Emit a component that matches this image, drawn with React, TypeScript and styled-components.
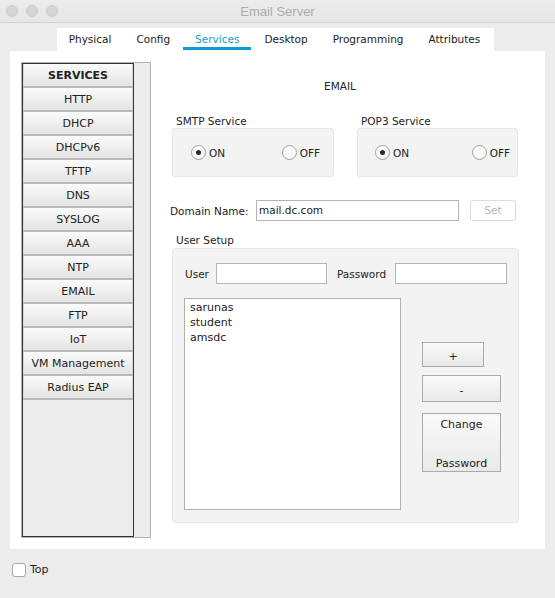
import React from "react";
import styled, { createGlobalStyle } from "styled-components";

const GlobalStyle = createGlobalStyle`
  html, body { margin: 0; padding: 0; background: #ececec; }
  * { box-sizing: border-box; }
`;

const Window = styled.div`
  width: 555px;
  height: 598px;
  background: #ececec;
  display: flex;
  flex-direction: column;
  font-family: "DejaVu Sans", Verdana, sans-serif;
  color: #222;
  overflow: hidden;
`;

const TitleBar = styled.div`
  height: 23px;
  border-bottom: 1px solid #d2d2d2;
  background: linear-gradient(#ececec, #e6e6e6);
  display: flex;
  align-items: center;
  position: relative;
  padding-left: 6px;
  border-radius: 5px 5px 0 0;
`;

const Lights = styled.div`
  display: flex;
  gap: 8px;
`;

const Light = styled.span`
  width: 12px;
  height: 12px;
  border-radius: 50%;
  background: #d5d5d5;
  border: 1px solid #cbcbcb;
`;

const Title = styled.div`
  position: absolute;
  left: 0;
  right: 0;
  text-align: center;
  font-family: "Liberation Sans", Arial, sans-serif;
  font-size: 13px;
  color: #acacac;
  pointer-events: none;
`;

const TabStrip = styled.div`
  align-self: center;
  margin: 5px 4px 0 0;
  display: flex;
  background: #fff;
  height: 23px;
  padding-right: 1px;
`;

const Tab = styled.div<{ $active?: boolean }>`
  position: relative;
  padding: 0 12px;
  margin-right: 1px;
  font-size: 10.5px;
  line-height: 23px;
  color: ${(p) => (p.$active ? "#1a9ad6" : "#222")};
  ${(p) =>
    p.$active &&
    `&::after {
      content: "";
      position: absolute;
      left: 0; right: 0; bottom: 1px;
      height: 3px;
      background: #0a9bd8;
    }`}
`;

const Panel = styled.div`
  margin: 0 10px;
  height: 498px;
  background: #fff;
  display: flex;
  padding: 11px;
`;

const ListFrame = styled.div`
  width: 130px;
  height: 476px;
  border: 1px solid #b2b2b2;
  background: #ececec;
  display: flex;
`;

const ListBox = styled.div`
  width: 112px;
  border: 1px solid #333;
  background: #ececec;
  display: flex;
  flex-direction: column;
`;

const ServiceButton = styled.div<{ $header?: boolean }>`
  height: 24px;
  border-bottom: 2px solid #b8b8b8;
  border-left: 1px solid #dadada;
  border-right: 1px solid #dadada;
  background: linear-gradient(#fbfbfb, #e3e3e3);
  text-align: center;
  font-size: 11px;
  line-height: 24px;
  font-weight: ${(p) => (p.$header ? 700 : 400)};
  color: #222;
  white-space: nowrap;
`;

const ScrollTrack = styled.div`
  flex: 1;
  background: #ececec;
`;

const Pane = styled.div`
  flex: 1;
  display: flex;
  flex-direction: column;
  padding: 0 15px 0 21px;
  font-size: 10.5px;
`;

const PaneTitle = styled.div`
  margin-top: 17px;
  padding-right: 11px;
  text-align: center;
  line-height: 14px;
`;

const ServiceRow = styled.div`
  margin-top: 22px;
  display: grid;
  grid-template-columns: 162px 161px;
  column-gap: 23px;
`;

const Label = styled.div<{ $indent?: number }>`
  line-height: 13px;
  padding-left: ${(p) => p.$indent ?? 4}px;
  white-space: nowrap;
`;

const ServiceBox = styled.div<{ $pl: number; $pr: number }>`
  height: 49px;
  background: #f3f3f3;
  border: 1px solid #e6e6e6;
  border-radius: 3px;
  display: flex;
  align-items: center;
  justify-content: space-between;
  padding: 0 ${(p) => p.$pr}px 0 ${(p) => p.$pl}px;
`;

const RadioOption = styled.div`
  display: flex;
  align-items: center;
  gap: 3px;
`;

const RadioCircle = styled.span<{ $on?: boolean }>`
  width: 15px;
  height: 15px;
  border-radius: 50%;
  border: 1px solid #a0a0a0;
  background: linear-gradient(#ffffff, #f4f4f4);
  display: flex;
  align-items: center;
  justify-content: center;
  &::after {
    content: "";
    width: 5px;
    height: 5px;
    border-radius: 50%;
    background: ${(p) => (p.$on ? "#2b2b2b" : "transparent")};
  }
`;

const DomainRow = styled.div`
  margin-top: 23px;
  margin-left: -2px;
  display: flex;
  align-items: center;
  height: 21px;
`;

const DomainLabel = styled.div`
  width: 86px;
  white-space: nowrap;
`;

const TextInput = styled.div<{ $w: number }>`
  width: ${(p) => p.$w}px;
  height: 21px;
  border: 1px solid #b4b4b4;
  background: #fff;
  padding-left: 2px;
  line-height: 19px;
  white-space: nowrap;
`;

const SetButton = styled.div`
  margin-left: 11px;
  width: 46px;
  height: 21px;
  border: 1px solid #dcdcdc;
  border-radius: 3px;
  background: #fff;
  color: #b3b3b3;
  text-align: center;
  line-height: 19px;
`;

const SetupLabel = styled(Label)`
  margin-top: 13px;
  margin-bottom: 1px;
`;

const SetupBox = styled.div`
  height: 275px;
  background: #f3f3f3;
  border: 1px solid #e6e6e6;
  border-radius: 4px;
  padding: 14px 11px 0 12px;
  display: flex;
  flex-direction: column;
`;

const CredRow = styled.div`
  display: flex;
  align-items: center;
  height: 21px;
`;

const CredLabel = styled.div<{ $w: number; $ml?: number }>`
  width: ${(p) => p.$w}px;
  margin-left: ${(p) => p.$ml ?? 0}px;
  white-space: nowrap;
`;

const UsersArea = styled.div`
  margin-top: 14px;
  margin-left: -1px;
  display: flex;
`;

const UserList = styled.div`
  width: 217px;
  height: 212px;
  background: #fff;
  border: 1px solid #b0b0b0;
  padding: 1px 5px;
  font-size: 11px;
  line-height: 15px;
`;

const ButtonColumn = styled.div`
  margin-left: 21px;
  padding-top: 44px;
  display: flex;
  flex-direction: column;
`;

const ActionButton = styled.div<{ $w: number; $h: number; $mt?: number }>`
  width: ${(p) => p.$w}px;
  height: ${(p) => p.$h}px;
  margin-top: ${(p) => p.$mt ?? 0}px;
  border: 1px solid #ababab;
  background: linear-gradient(#fafafa, #e9e9e9);
  display: flex;
  flex-direction: column;
  align-items: center;
  justify-content: space-between;
  padding: 4px 0 1px;
  font-size: 11px;
  color: #222;
`;

const CenterText = styled.span`
  margin: auto 0;
`;

const Footer = styled.div`
  flex: 1;
  display: flex;
  align-items: flex-start;
  padding: 14px 0 0 12px;
  gap: 4px;
  font-size: 11px;
`;

const CheckBox = styled.span`
  width: 14px;
  height: 14px;
  border: 1px solid #a8a8a8;
  border-radius: 3px;
  background: #fff;
`;

const FooterLabel = styled.span`
  line-height: 14px;
`;

const services = [
  "HTTP",
  "DHCP",
  "DHCPv6",
  "TFTP",
  "DNS",
  "SYSLOG",
  "AAA",
  "NTP",
  "EMAIL",
  "FTP",
  "IoT",
  "VM Management",
  "Radius EAP",
];

const tabs = ["Physical", "Config", "Services", "Desktop", "Programming", "Attributes"];

export default function App() {
  return (
    <>
      <GlobalStyle />
      <Window>
        <TitleBar>
          <Lights>
            <Light />
            <Light />
            <Light />
          </Lights>
          <Title>Email Server</Title>
        </TitleBar>
        <TabStrip>
          {tabs.map((t) => (
            <Tab key={t} $active={t === "Services"}>
              {t}
            </Tab>
          ))}
        </TabStrip>
        <Panel>
          <ListFrame>
            <ListBox>
              <ServiceButton $header>SERVICES</ServiceButton>
              {services.map((s) => (
                <ServiceButton key={s}>{s}</ServiceButton>
              ))}
            </ListBox>
            <ScrollTrack />
          </ListFrame>
          <Pane>
            <PaneTitle>EMAIL</PaneTitle>
            <ServiceRow>
              <Label>SMTP Service</Label>
              <Label>POP3 Service</Label>
              <ServiceBox $pl={18} $pr={13}>
                <RadioOption>
                  <RadioCircle $on />
                  <span>ON</span>
                </RadioOption>
                <RadioOption>
                  <RadioCircle />
                  <span>OFF</span>
                </RadioOption>
              </ServiceBox>
              <ServiceBox $pl={17} $pr={7}>
                <RadioOption>
                  <RadioCircle $on />
                  <span>ON</span>
                </RadioOption>
                <RadioOption>
                  <RadioCircle />
                  <span>OFF</span>
                </RadioOption>
              </ServiceBox>
            </ServiceRow>
            <DomainRow>
              <DomainLabel>Domain Name:</DomainLabel>
              <TextInput $w={203}>mail.dc.com</TextInput>
              <SetButton>Set</SetButton>
            </DomainRow>
            <SetupLabel>User Setup</SetupLabel>
            <SetupBox>
              <CredRow>
                <CredLabel $w={31}>User</CredLabel>
                <TextInput $w={111} />
                <CredLabel $w={58} $ml={10}>
                  Password
                </CredLabel>
                <TextInput $w={112} />
              </CredRow>
              <UsersArea>
                <UserList>
                  <div>sarunas</div>
                  <div>student</div>
                  <div>amsdc</div>
                </UserList>
                <ButtonColumn>
                  <ActionButton $w={62} $h={25}>
                    <CenterText>+</CenterText>
                  </ActionButton>
                  <ActionButton $w={79} $h={27} $mt={8}>
                    <CenterText>-</CenterText>
                  </ActionButton>
                  <ActionButton $w={79} $h={59} $mt={11}>
                    <span>Change</span>
                    <span>Password</span>
                  </ActionButton>
                </ButtonColumn>
              </UsersArea>
            </SetupBox>
          </Pane>
        </Panel>
        <Footer>
          <CheckBox />
          <FooterLabel>Top</FooterLabel>
        </Footer>
      </Window>
    </>
  );
}
